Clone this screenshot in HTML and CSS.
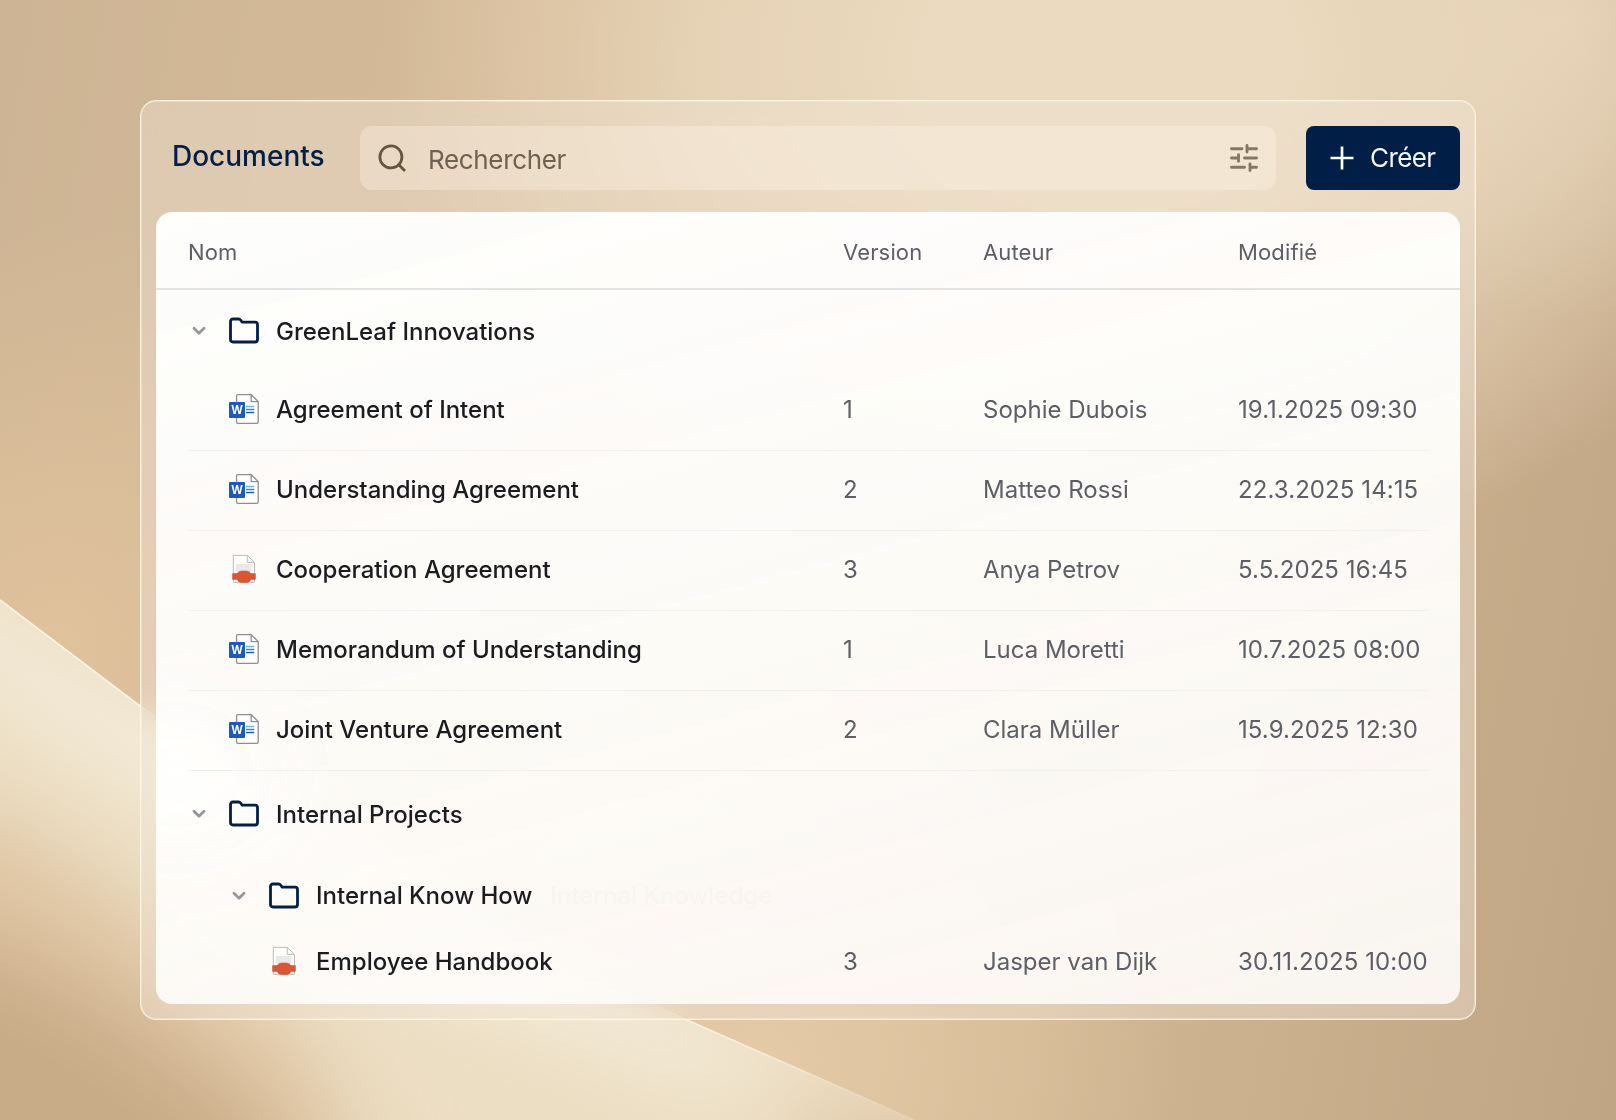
FILE: index.html
```html
<!DOCTYPE html>
<html lang="fr">
<head>
    <meta charset="UTF-8">
    <meta name="viewport" content="width=device-width, initial-scale=1.0">
    <title>Documents</title>
    <link rel="stylesheet" href="styles.css">
</head>
<body>
    <!-- Backdrop -->
    <svg class="backdrop" viewBox="0 0 1616 1120" preserveAspectRatio="none" aria-hidden="true">
        <defs>
            <clipPath id="sheet">
                <path d="M0 600L140 706Q400 888 687 1020L915 1120H0Z"/>
            </clipPath>
            <linearGradient id="edge" gradientUnits="userSpaceOnUse" x1="0" y1="600" x2="915" y2="1120">
                <stop offset="0" stop-color="#fbf5e2"/>
                <stop offset="0.8" stop-color="#fbf0dc"/>
                <stop offset="1" stop-color="#fbf0dc" stop-opacity="0"/>
            </linearGradient>
            <filter id="soft" x="-50%" y="-50%" width="200%" height="200%">
                <feGaussianBlur stdDeviation="42"/>
            </filter>
        </defs>
        <g clip-path="url(#sheet)">
            <rect y="590" width="920" height="530" fill="#ecdec3"/>
            <g filter="url(#soft)">
                <path d="M-200 500L140 706L687 1020L800 1070L700 1080L400 960L0 690Z" fill="#f6efdf"/>
                <path d="M-200 790L0 820L120 900L300 1040L440 1300H-200Z" fill="#dfc4a2"/>
                <path d="M-200 930L0 950L110 1010L260 1120L300 1300H-200Z" fill="#c8ab87"/>
                <path d="M780 1150L850 1090L1000 1110V1200H780Z" fill="#e2c8a8"/>
            </g>
        </g>
        <path d="M0 600L140 706Q400 888 687 1020L915 1120" fill="none" stroke="url(#edge)" stroke-width="1.6"/>
    </svg>

    <main class="panel">
        <!-- Toolbar -->
        <header class="toolbar">
            <h1 class="title">Documents</h1>
            <div class="search">
                <svg class="search-icon" viewBox="0 0 28 28"><circle cx="12.9" cy="12.9" r="11"/><path d="M20.5 20.5L27 27"/></svg>
                <span class="placeholder">Rechercher</span>
                <svg class="filter-icon" viewBox="0 0 28 28"><path d="M1.5 4.7H12M17 1.5V8M17 4.7H26.5M1.5 14H8.5M8.5 10.8V17.3M14.5 14H26.5M1.5 23.3H14.5M20 20V26.5M20 23.3H26.5"/></svg>
            </div>
            <button class="create">
                <svg class="plus-icon" viewBox="0 0 24 24"><path d="M12 0.5V23.5M0.5 12H23.5"/></svg>
                Créer
            </button>
        </header>

        <!-- Document list -->
        <section class="table">
            <div class="row head">
                <span>Nom</span><span>Version</span><span>Auteur</span><span>Modifié</span>
            </div>

            <div class="row folder">
                <div class="name">
                    <svg class="chevron" viewBox="0 0 14 10"><path d="M2 2.2L7 7.2L12 2.2"/></svg>
                    <svg class="icon"><use href="#icon-folder"/></svg>
                    GreenLeaf Innovations
                </div>
            </div>
            <div class="row file">
                <div class="name"><svg class="icon"><use href="#icon-word"/></svg>Agreement of Intent</div>
                <span>1</span><span>Sophie Dubois</span><span class="date">19.1.2025 09:30</span>
            </div>
            <div class="row file">
                <div class="name"><svg class="icon"><use href="#icon-word"/></svg>Understanding Agreement</div>
                <span>2</span><span>Matteo Rossi</span><span class="date">22.3.2025 14:15</span>
            </div>
            <div class="row file">
                <div class="name"><svg class="icon"><use href="#icon-pdf"/></svg>Cooperation Agreement</div>
                <span>3</span><span>Anya Petrov</span><span class="date">5.5.2025 16:45</span>
            </div>
            <div class="row file">
                <div class="name"><svg class="icon"><use href="#icon-word"/></svg>Memorandum of Understanding</div>
                <span>1</span><span>Luca Moretti</span><span class="date">10.7.2025 08:00</span>
            </div>
            <div class="row file">
                <div class="name"><svg class="icon"><use href="#icon-word"/></svg>Joint Venture Agreement</div>
                <span>2</span><span>Clara Müller</span><span class="date">15.9.2025 12:30</span>
            </div>

            <div class="row folder second">
                <div class="name">
                    <svg class="chevron" viewBox="0 0 14 10"><path d="M2 2.2L7 7.2L12 2.2"/></svg>
                    <svg class="icon"><use href="#icon-folder"/></svg>
                    Internal Projects
                </div>
            </div>
            <div class="row folder nested">
                <div class="name">
                    <svg class="chevron" viewBox="0 0 14 10"><path d="M2 2.2L7 7.2L12 2.2"/></svg>
                    <svg class="icon"><use href="#icon-folder"/></svg>
                    Internal Know How
                    <span class="ghost">Internal Knowledge</span>
                </div>
            </div>
            <div class="row file nested last">
                <div class="name"><svg class="icon"><use href="#icon-pdf"/></svg>Employee Handbook</div>
                <span>3</span><span>Jasper van Dijk</span><span class="date">30.11.2025 10:00</span>
            </div>
        </section>
    </main>

    <!-- Shared icons -->
    <svg class="sprite" aria-hidden="true">
        <symbol id="icon-folder" viewBox="0 0 30 30">
            <path d="M1.5 5.5Q1.5 3 4 3H9.6Q10.8 3 11.6 4L13.2 6.2H26Q28.5 6.2 28.5 8.7V23.5Q28.5 26 26 26H4Q1.5 26 1.5 23.5Z" fill="none" stroke="#021f47" stroke-width="2.8" stroke-linejoin="round"/>
        </symbol>
        <symbol id="icon-word" viewBox="0 0 30 30">
            <path d="M8.6 0.7H22.2L29.2 7.6V28Q29.2 29.3 28 29.3H8.8Q7.6 29.3 7.6 28V1.7Q7.6 0.7 8.6 0.7Z" fill="#fff" stroke="#8f8f8f" stroke-width="1.3"/>
            <path d="M22.2 0.7V7.6H29.2" fill="none" stroke="#8f8f8f" stroke-width="1.3"/>
            <path d="M17 12.5H25.3" stroke="#6cb6ee" stroke-width="1.5"/>
            <path d="M17 15.5H25.3" stroke="#3a83d6" stroke-width="1.5"/>
            <path d="M17 18.5H25.3" stroke="#2260b8" stroke-width="1.5"/>
            <rect x="0" y="8" width="16" height="16" rx="1" fill="#1c5abc"/>
            <text x="8" y="20" text-anchor="middle" font-family="Open Sans, sans-serif" font-size="11.5" font-weight="700" fill="#fff">W</text>
        </symbol>
        <symbol id="icon-pdf" viewBox="0 0 30 30">
            <path d="M4.3 1.4H18.3L25.5 8.4V28.3H4.3Z" fill="#fefefd" stroke="#b5b5b5" stroke-width="0.9"/>
            <path d="M18.3 1.4V8.4H25.5" fill="none" stroke="#b5b5b5" stroke-width="0.9"/>
            <rect x="7" y="10" width="15.5" height="8" fill="#e9e9ea"/>
            <path d="M3.6 19.6H8Q10 17 12 17H18Q20 17 22 19.6H26.4V25.4H22Q20.5 28.4 18 28.4H12Q9.5 28.4 8 25.4H3.6Z" fill="#da5530" stroke="#da5530" stroke-width="0.6" stroke-linejoin="round"/>
        </symbol>
    </svg>
</body>
</html>
```
FILE: styles.css
```css
* {
    box-sizing: border-box;
}

body {
    margin: 0;
    width: 1616px;
    height: 1120px;
    overflow: hidden;
    display: flex;
    align-items: flex-start;
    padding: 100px 140px;
    font-family: Inter, "Noto Sans", sans-serif;
    color: #1b1c20;
    background:
        radial-gradient(ellipse 230px 300px at 1570px 20px, rgba(238, 220, 194, 0.6), rgba(238, 220, 194, 0) 100%),
        radial-gradient(ellipse 720px 520px at 1110px 60px, #ebdabf 25%, rgba(235, 218, 191, 0.75) 55%, rgba(235, 218, 191, 0) 100%),
        radial-gradient(ellipse 420px 420px at 60px 640px, rgba(225, 195, 157, 0.95), rgba(225, 195, 157, 0) 100%),
        radial-gradient(ellipse 420px 360px at 760px 1060px, #e4caa6, rgba(228, 202, 166, 0) 100%),
        linear-gradient(100deg, #cdb494 0%, #d8bd9a 40%, #d3b894 65%, #c0a585 100%);
}

.backdrop {
    position: absolute;
    top: 0;
    left: 0;
    width: 1616px;
    height: 1120px;
}

.sprite {
    display: none;
}

/* Glass panel */
.panel {
    position: relative;
    width: 1336px;
    height: 920px;
    padding: 24px 15px 15px;
    border: 1px solid #fdf5e0;
    border-radius: 16px;
    background: rgba(240, 229, 214, 0.42);
    box-shadow: inset 0 0 0 1px rgba(255, 248, 230, 0.35);
    backdrop-filter: blur(14px);
}

/* Toolbar */
.toolbar {
    display: flex;
    align-items: center;
    height: 65px;
    margin-bottom: 22px;
}

.title {
    width: 204px;
    margin: 0;
    padding: 0 0 4px 16px;
    font-size: 28px;
    font-weight: 500;
    color: #021f47;
}

.search {
    display: flex;
    align-items: center;
    width: 916px;
    height: 64px;
    margin-right: 30px;
    margin-top: 1px;
    padding: 0 18px 0 18px;
    border-radius: 12px;
    background: rgba(255, 246, 234, 0.33);
}

.search-icon {
    width: 28px;
    height: 28px;
    fill: none;
    stroke: #665640;
    stroke-width: 2.8;
}

.placeholder {
    flex: 1;
    padding: 2px 0 0 22px;
    font-size: 26px;
    letter-spacing: -0.35px;
    color: #6e6251;
}

.filter-icon {
    width: 28px;
    height: 28px;
    fill: none;
    stroke: #847864;
    stroke-width: 2.9;
    stroke-linecap: round;
}

.create {
    display: flex;
    align-items: center;
    width: 154px;
    height: 64px;
    padding: 0 0 0 24px;
    gap: 16px;
    border: none;
    border-radius: 8px;
    background: #001e46;
    color: #f4f6f9;
    font-family: inherit;
    font-size: 26px;
    letter-spacing: -0.6px;
}

.plus-icon {
    width: 24px;
    height: 24px;
    stroke: #fff;
    stroke-width: 2.7;
}

/* Table */
.table {
    height: 792px;
    padding: 0 31px 0 32px;
    border-radius: 16px;
    background:
        radial-gradient(ellipse 160px 130px at 20px 560px, rgba(255, 255, 255, 0.7), rgba(255, 255, 255, 0)),
        linear-gradient(165deg, rgba(255, 255, 255, 0.97) 0%, rgba(254, 253, 251, 0.94) 50%, rgba(253, 250, 247, 0.9) 100%);
}

.row {
    display: grid;
    grid-template-columns: 655px 140px 255px 1fr;
    align-items: center;
    height: 80px;
    font-size: 24px;
    white-space: nowrap;
    color: #5d5f66;
}

.head {
    height: 78px;
    margin: 0 -31px 0 -32px;
    padding: 4px 31px 0 32px;
    border-bottom: 2px solid #e1e2e2;
    font-size: 22px;
    letter-spacing: 0.15px;
}

.file {
    padding-bottom: 3px;
    border-bottom: 1px solid #f2f1ee;
}

.date {
    letter-spacing: 0.08px;
}

.name {
    display: flex;
    align-items: center;
    padding-left: 41px;
    font-weight: 500;
    color: #1b1c20;
}

.folder {
    height: 81px;
    padding-top: 1px;
}

.folder .name {
    padding-left: 4px;
}

.second {
    height: 86px;
    padding-top: 0;
}

.nested {
    height: 78px;
    padding-top: 0;
}

.folder.nested {
    padding-bottom: 1px;
}

.folder.nested .name {
    padding-left: 44px;
}

.file.nested .name {
    padding-left: 81px;
}

.last {
    height: 55px;
    border-bottom: none;
}

.ghost {
    margin-left: 18px;
    color: #f8f5f0;
}

.icon {
    width: 30px;
    height: 30px;
    margin-right: 17px;
}

.chevron {
    width: 14px;
    height: 10px;
    margin-right: 23px;
    fill: none;
    stroke: #96979a;
    stroke-width: 2.8;
    stroke-linecap: round;
    stroke-linejoin: round;
}
```
